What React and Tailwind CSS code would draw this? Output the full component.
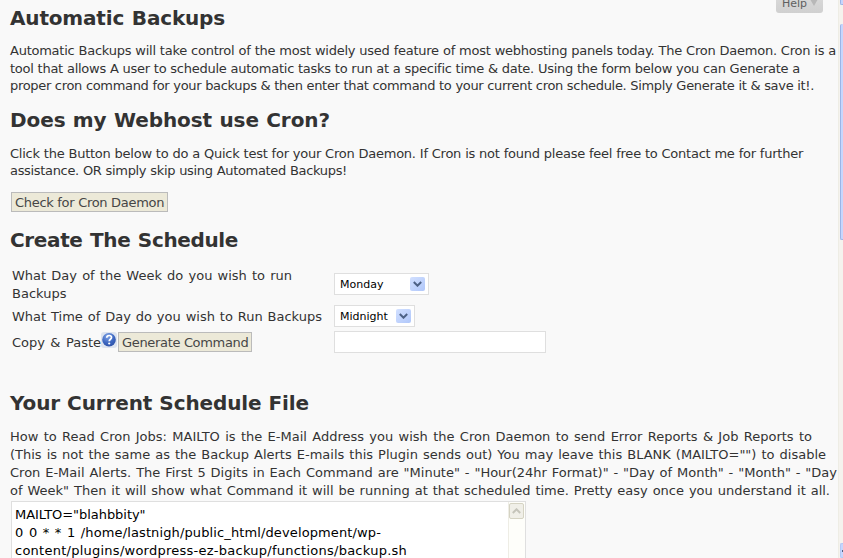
import React from "react";

function Heading({ className, children }) {
  return <h2 className={"whitespace-nowrap font-bold text-[20px] leading-[30px] text-[#333] [text-align-last:justify] " + className}>{children}</h2>;
}

function Line({ className, children }) {
  return <span className={"block whitespace-nowrap [text-align-last:justify] " + className}>{children}</span>;
}

function Chevron({ up, className }) {
  return (
    <svg viewBox="0 0 9 6" className={"h-[6px] w-[9px] " + className} fill="none" stroke="currentColor" strokeWidth="2">
      <path d={up ? "M0.8 5 4.5 1.3 8.2 5" : "M0.8 1 4.5 4.7 8.2 1"} />
    </svg>
  );
}

function Select({ className, label, labelClass }) {
  return (
    <div className={"flex h-[22px] items-center justify-between border border-[#dfdfdf] bg-white pl-[5px] pr-[3px] text-[11px] leading-[20px] text-black " + className}>
      <span className={"block whitespace-nowrap pt-[2px] " + labelClass}>{label}</span>
      <span className="flex h-[14px] w-[15px] items-center justify-center rounded-[2px] bg-linear-to-br from-[#d2e0ff] to-[#b0c7fa]">
        <Chevron className="text-[#4d6185]" />
      </span>
    </div>
  );
}

function HelpIcon() {
  return (
    <svg viewBox="0 0 16 16" className="mb-[4px] h-4 w-4 shrink-0">
      <defs>
        <radialGradient id="ball" cx="0.4" cy="0.25" r="0.8">
          <stop offset="0" stopColor="#7fa3e6" />
          <stop offset="0.6" stopColor="#3c66c0" />
          <stop offset="1" stopColor="#2b4fa5" />
        </radialGradient>
      </defs>
      <rect width="16" height="16" rx="3" fill="#dce3ef" />
      <circle cx="8" cy="7.8" r="6.8" fill="url(#ball)" />
      <path d="M5.7 5.8C5.8 4.3 6.8 3.5 8.1 3.5c1.4 0 2.4.8 2.4 2 0 1.7-2.3 1.8-2.3 3.7" fill="none" stroke="#fff" strokeWidth="1.7" />
      <circle cx="8.2" cy="11.5" r="1.1" fill="#fff" />
    </svg>
  );
}

function Button({ className, children }) {
  return (
    <button className={"block h-[20px] shrink-0 whitespace-nowrap border border-[#bbb] bg-[#ece9d8] px-[3px] pt-px leading-[18px] text-[#464646] [text-align-last:justify] " + className}>
      {children}
    </button>
  );
}

export default function App() {
  return (
    <div className="relative flex h-[558px] w-[843px] overflow-hidden bg-[#f9f9f9] font-['DejaVu_Sans',Verdana,sans-serif] text-[13px] text-[#333]">
      <main className="w-[838px] shrink-0 pl-[10px]">
        <Heading className="mt-[3px] w-[215px] tracking-[-0.17px]">Automatic Backups</Heading>
        <p className="mt-[9px] leading-[17.6px]">
          <Line className="w-[826px] tracking-[-0.25px]">Automatic Backups will take control of the most widely used feature of most webhosting panels today. The Cron Daemon. Cron is a</Line>
          <Line className="w-[790px] tracking-[-0.25px]">tool that allows A user to schedule automatic tasks to run at a specific time &amp; date. Using the form below you can Generate a</Line>
          <Line className="w-[804px] tracking-[-0.32px]">proper cron command for your backups &amp; then enter that command to your current cron schedule. Simply Generate it &amp; save it!.</Line>
        </p>
        <Heading className="mt-[10px] w-[320px] tracking-[-0.08px]">Does my Webhost use Cron?</Heading>
        <p className="mt-[10px] leading-[17.6px]">
          <Line className="w-[793px] tracking-[-0.24px]">Click the Button below to do a Quick test for your Cron Daemon. If Cron is not found please feel free to Contact me for further</Line>
          <Line className="w-[337px] tracking-[-0.33px]">assistance. OR simply skip using Automated Backups!</Line>
        </p>
        <Button className="ml-px mt-[12px] w-[157px] tracking-[-0.3px]">Check for Cron Daemon</Button>
        <Heading className="mt-[13px] w-[228px] tracking-[-0.36px]">Create The Schedule</Heading>

        <div className="mt-[12px] flex h-[36px] pl-[2px] leading-[18px]">
          <div className="w-[322px]">
            <Line className="w-[280px]">What Day of the Week do you wish to run</Line>
            <Line className="w-[54px]">Backups</Line>
          </div>
          <Select className="mt-[6px] w-[95px]" label="Monday" labelClass="w-[45px]" />
        </div>
        <div className="mt-[2px] flex h-[22px] pl-[2px]">
          <div className="w-[322px] pt-px"><Line className="w-[310px] leading-[22px]">What Time of Day do you wish to Run Backups</Line></div>
          <Select className="w-[81px]" label="Midnight" labelClass="w-[48px]" />
        </div>
        <div className="mt-[4px] flex h-[22px] pl-[2px]">
          <div className="flex w-[322px] items-center">
            <Line className="w-[89px] pt-[2px] leading-[22px]">Copy &amp; Paste</Line>
            <HelpIcon />
            <Button className="ml-px w-[134px] tracking-[-0.33px]">Generate Command</Button>
          </div>
          <input aria-label="Generated command" className="h-[22px] w-[212px] border border-[#dfdfdf] bg-white outline-none" />
        </div>

        <Heading className="mt-[35px] w-[299px] tracking-[-0.12px]">Your Current Schedule File</Heading>
        <p className="mt-[10px] leading-[18px]">
          <Line className="w-[802px]">How to Read Cron Jobs: MAILTO is the E-Mail Address you wish the Cron Daemon to send Error Reports &amp; Job Reports to</Line>
          <Line className="w-[816px]">(This is not the same as the Backup Alerts E-mails this Plugin sends out) You may leave this BLANK (MAILTO="") to disable</Line>
          <Line className="w-[827px]">Cron E-Mail Alerts. The First 5 Digits in Each Command are "Minute" - "Hour(24hr Format)" - "Day of Month" - "Month" - "Day</Line>
          <Line className="w-[820px]">of Week" Then it will show what Command it will be running at that scheduled time. Pretty easy once you understand it all.</Line>
        </p>
        <div className="ml-px mt-px flex h-[100px] w-[515px] border border-[#dfdfdf] bg-white text-black">
          <div className="grow pl-[3px] pt-[4px] leading-[18px]">
            <Line className="w-[130px] tracking-[-0.05px]">MAILTO="blahbbity"</Line>
            <Line className="w-[366px] tracking-[0.12px]">0 0 * * 1 /home/lastnigh/public_html/development/wp-</Line>
            <Line className="w-[392px] tracking-[0.25px]">content/plugins/wordpress-ez-backup/functions/backup.sh</Line>
          </div>
          <div className="w-[17px] shrink-0 border-l border-[#eeede5] bg-[#fefefa]">
            <div className="mt-px flex h-[16px] w-[15px] items-center justify-center rounded-[2px] border border-[#d5d3c3] bg-[#f0efe8]">
              <Chevron up className="text-[#c5c4ba]" />
            </div>
          </div>
        </div>
      </main>

      <div className="absolute left-[776px] top-[-8px] flex h-[21px] w-[47px] items-center rounded-b-[3px] bg-linear-to-b from-[#dcdcdc] to-[#d0d0d0] pl-[6px] text-[11px] text-[#606060]">
        <span className="block w-[25px] pt-[2px] leading-[21px]">Help</span>
        <svg viewBox="0 0 8 7" className="ml-[3px] h-[7px] w-[8px]"><path d="M0 0h8L4 7z" fill="#b8b8b8" /></svg>
      </div>

      <aside className="flex w-[5px] shrink-0 flex-col border-l border-[#eeede5] bg-[#f5f3ee] pl-px">
        <div className="h-[5px] rounded-bl-[2px] border-b border-l border-[#9cb4e6] bg-[#c6d6fd]" />
        <div className="mt-[19px] h-[216px] rounded-l-[2px] border-b border-l border-[#9cb4e6] bg-[#c6d6fd]" />
        <div className="mt-[303px] flex h-[15px] items-center rounded-l-[2px] border border-r-0 border-[#b4c8f6] bg-[#c6d6fd]">
          <span className="ml-px h-[2px] w-[2px] bg-[#4d6185]" />
        </div>
      </aside>
    </div>
  );
}
